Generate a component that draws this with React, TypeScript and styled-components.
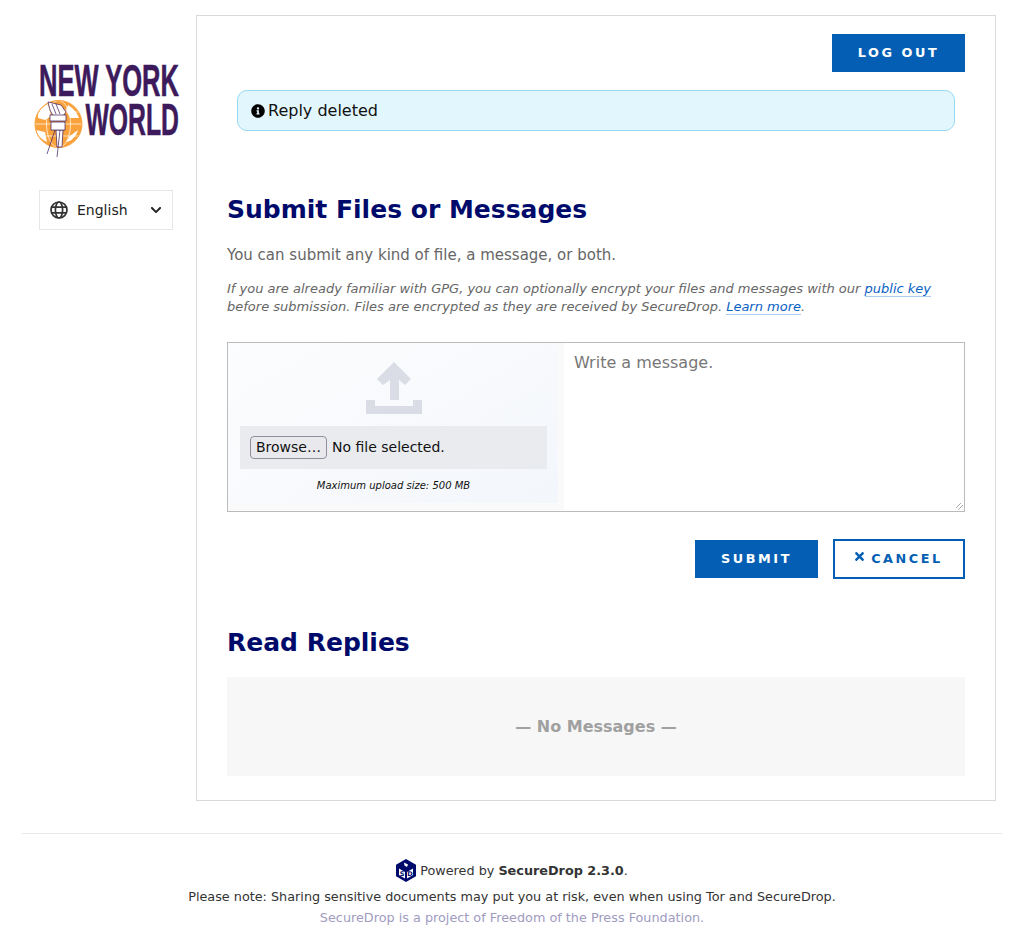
import React from "react";
import styled, {createGlobalStyle} from "styled-components";
import {FaChevronDown, FaInfoCircle, FaTimes} from "react-icons/fa";

const GlobalStyle = createGlobalStyle`
  html, body {
    margin: 0;
    padding: 0;
    background: #fff;
    font-family: "DejaVu Sans", Verdana, sans-serif;
    color: #333;
  }
  * {
    box-sizing: border-box;
  }
`;

const Page = styled.div`
  width: 1024px;
  padding-top: 15px;
`;

const Columns = styled.div`
  display: flex;
  align-items: flex-start;
`;

const Sidebar = styled.aside`
  width: 196px;
  padding: 49px 0 0 32px;
`;

const LogoSvg = styled.svg`
  display: block;
  width: 150px;
  height: 96px;
`;

const LocaleBox = styled.div`
  display: flex;
  align-items: center;
  width: 134px;
  height: 40px;
  margin: 30px 0 0 7px;
  padding: 0 10px;
  border: 1px solid #e6e6e6;
  font-size: 14px;
  color: #222;
`;

const LocaleLabel = styled.span`
  margin-left: 9px;
  flex: 1;
`;

const Main = styled.main`
  width: 800px;
  height: 786px;
  padding: 18px 30px 0;
  border: 1px solid #d9d9d9;
`;

const TopRow = styled.div`
  display: flex;
  justify-content: flex-end;
`;

const Button = styled.button<{$outline?: boolean}>`
  display: flex;
  align-items: center;
  justify-content: center;
  height: ${p => (p.$outline ? 40 : 38)}px;
  padding: 0 ${p => (p.$outline ? 2 : 0)}px ${p => (p.$outline ? 2 : 1)}px 0;
  border: ${p => (p.$outline ? "2px solid #045fb4" : "none")};
  border-radius: 0;
  background: ${p => (p.$outline ? "#fff" : "#045fb4")};
  color: ${p => (p.$outline ? "#045fb4" : "#fff")};
  font: bold 12.8px "DejaVu Sans", sans-serif;
  letter-spacing: 2.56px;
`;

const LogoutButton = styled(Button)`
  width: 133px;
`;

const SubmitButton = styled(Button)`
  width: 123px;
`;

const CancelButton = styled(Button)`
  width: 132px;
  svg {
    margin: -3px 5px 0 0;
    font-size: 13px;
  }
`;

const Flash = styled.div`
  display: flex;
  align-items: center;
  gap: 3px;
  height: 41px;
  margin: 18px 10px 0;
  padding: 0 13px;
  border: 1px solid #96daf3;
  border-radius: 10px;
  background: #e2f6fd;
  color: #111;
  font-size: 16px;
  svg {
    font-size: 14px;
    color: #000;
  }
`;

const Heading = styled.h2<{$top: number}>`
  margin: ${p => p.$top}px 0 0;
  font-size: 25px;
  line-height: 30px;
  font-weight: bold;
  color: #000a6b;
`;

const Lead = styled.p`
  margin: 20px 0 0;
  font-size: 15px;
  line-height: 20px;
  color: #666;
`;

const Note = styled.p`
  margin: 15px 0 0;
  font-size: 13px;
  font-style: italic;
  line-height: 18px;
  color: #666;
`;

const NoteLink = styled.a`
  color: #0b62c4;
  border-bottom: 1px solid #a8cdf0;
`;

const Composer = styled.div`
  display: flex;
  height: 170px;
  margin-top: 26px;
  border: 1px solid #bbb;
`;

const UploadPanel = styled.div`
  display: flex;
  flex-direction: column;
  align-items: center;
  width: 336px;
  padding: 19px 17px 0 12px;
  background: linear-gradient(150deg, #fcfdfe, #f3f6fb) 0 0 / 330px 160px no-repeat, #fafafa;
`;

const FileRow = styled.div`
  display: flex;
  align-items: center;
  gap: 5px;
  width: 100%;
  height: 43px;
  margin-top: 12px;
  padding: 0 0 1px 10px;
  background: #e9ebef;
  font-size: 14px;
  color: #111;
`;

const BrowseButton = styled.span`
  display: flex;
  align-items: center;
  justify-content: center;
  width: 77px;
  height: 23px;
  border: 1px solid #8f8f9d;
  border-radius: 4px;
  background: #e9e9ed;
  color: #111;
`;

const UploadLimit = styled.div`
  margin-top: 10px;
  font-size: 10px;
  font-style: italic;
  line-height: 14px;
  color: #111;
`;

const MessageInput = styled.textarea`
  flex: 1;
  padding: 10px 10px;
  border: none;
  outline: none;
  resize: none;
  background: linear-gradient(135deg, transparent 3px, #aaa 3px 4px, transparent 4px 6px, #aaa 6px 7px, transparent 7px) right 1px bottom 1px / 7px 7px no-repeat, #fff;
  font: 16px/20px "DejaVu Sans", sans-serif;
  &::placeholder {
    color: #777;
    opacity: 1;
  }
`;

const Actions = styled.div`
  display: flex;
  justify-content: flex-end;
  align-items: center;
  gap: 15px;
  margin-top: 27px;
`;

const EmptyReplies = styled.div`
  display: flex;
  align-items: center;
  justify-content: center;
  height: 99px;
  margin-top: 19px;
  background: #f7f7f7;
  color: #a0a0a0;
  font-size: 16px;
  font-weight: bold;
`;

const Footer = styled.footer`
  margin: 32px 22px 0;
  padding-top: 26px;
  border-top: 1px solid #e8e8e8;
  text-align: center;
  font-size: 12.8px;
  color: #333;
`;

const FooterLine = styled.div<{$muted?: boolean}>`
  height: 21px;
  line-height: 21px;
  color: ${p => (p.$muted ? "#a09bbf" : "#333")};
`;

const PoweredLine = styled(FooterLine)`
  height: 22px;
  line-height: 22px;
  margin-bottom: 4px;
  svg {
    vertical-align: middle;
    margin: -2px 4px 0 0;
  }
`;

function Logo(): JSX.Element {
    const purple = "#3c1a5b";
    return <LogoSvg viewBox="0 0 150 96">
        <g fontFamily={'"Liberation Sans", sans-serif'} fontWeight="bold" fill={purple} stroke={purple} strokeWidth="0.6">
            <text transform="translate(7 32) scale(0.58 1)" fontSize="44">NEW YORK</text>
            <text transform="translate(53.5 71) scale(0.55 1)" fontSize="45">WORLD</text>
        </g>
        <circle cx="26.5" cy="60" r="23.5" fill="#f9a13a"/>
        <g fill="#fff">
            <path d="M6 50 q4 -8 10 -10 l3 12 -6 4 -7 -2z"/>
            <path d="M4 66 l9 2 2 10 q-9 -4 -11 -12z"/>
            <path d="M36 41 q8 5 11 13 l-9 0 -4 -8z"/>
            <path d="M38 72 l8 -6 q-2 7 -8 11 l-4 1z"/>
        </g>
        <g fill="none" stroke="#fff" strokeWidth="0.7">
            <ellipse cx="26.5" cy="60" rx="12" ry="23.5"/>
            <path d="M3 60h47M6 48h41M6 72h41"/>
        </g>
        <circle cx="26.5" cy="60" r="23.5" fill="none" stroke="#f9a13a" strokeWidth="1"/>
        <g fill="#fff" stroke={purple} strokeWidth="0.7">
            <path d="M16 38 L29 41 L34 48 L31 52 L21 52 L18 46z"/>
            <path d="M24 66 L31 66 L30 83 L25 83z"/>
            <rect x="18" y="51" width="16" height="6"/>
            <rect x="19" y="58" width="14" height="8"/>
        </g>
        <g fill="none" stroke={purple} strokeWidth="0.7">
            <path d="M23 66 L15 90"/>
            <path d="M28 66 L25 93"/>
            <path d="M20 40 L24 50 M24 40 L28 50"/>
        </g>
    </LogoSvg>;
}

function GlobeIcon(): JSX.Element {
    return <svg width="18" height="18" viewBox="0 0 18 18" fill="none" stroke="#333" strokeWidth="1.7">
        <circle cx="9" cy="9" r="8"/>
        <ellipse cx="9" cy="9" rx="3.6" ry="8"/>
        <path d="M1.5 6.2h15M1.5 11.8h15"/>
    </svg>;
}

function UploadIcon(): JSX.Element {
    return <svg width="56" height="52" viewBox="0 0 56 52" fill="#dadde6">
        <path d="M28 0 L45 17 L39 23 L33 18 L33 38 L24 38 L24 18 L17 23 L11 17z"/>
        <path d="M0 38 H9 V44 H47 V38 H56 V52 H0z"/>
    </svg>;
}

function SecureDropIcon(): JSX.Element {
    return <svg width="20" height="23" viewBox="0 0 20 23">
        <path d="M10 0 L20 5.7 V17.3 L10 23 L0 17.3 V5.7z" fill="#000a6b"/>
        <path d="M3 9.5 L9 13 V19.5 L3 16z M11 13 L17 9.5 V16 L11 19.5z" fill="#fff"/>
        <path d="M8 3.5 L12 5.5 L11 8 L8.5 6.5z" fill="#fff"/>
        <g fontFamily={'"DejaVu Sans", sans-serif'} fontWeight="bold" fontSize="6.5" fill="#000a6b" textAnchor="middle">
            <text x="6" y="17">S</text>
            <text x="14" y="17">D</text>
        </g>
    </svg>;
}

export default function App(): JSX.Element {
    return <Page>
        <GlobalStyle/>
        <Columns>
            <Sidebar>
                <Logo/>
                <LocaleBox>
                    <GlobeIcon/>
                    <LocaleLabel>English</LocaleLabel>
                    <FaChevronDown size={12}/>
                </LocaleBox>
            </Sidebar>
            <Main>
                <TopRow>
                    <LogoutButton>LOG OUT</LogoutButton>
                </TopRow>
                <Flash><FaInfoCircle/>Reply deleted</Flash>
                <Heading $top={64}>Submit Files or Messages</Heading>
                <Lead>You can submit any kind of file, a message, or both.</Lead>
                <Note>
                    If you are already familiar with GPG, you can optionally encrypt your files and messages with
                    our <NoteLink>public key</NoteLink> before submission. Files are encrypted as they are received
                    by SecureDrop. <NoteLink>Learn more</NoteLink>.
                </Note>
                <Composer>
                    <UploadPanel>
                        <UploadIcon/>
                        <FileRow>
                            <BrowseButton>Browse…</BrowseButton>
                            No file selected.
                        </FileRow>
                        <UploadLimit>Maximum upload size: 500 MB</UploadLimit>
                    </UploadPanel>
                    <MessageInput placeholder="Write a message."/>
                </Composer>
                <Actions>
                    <SubmitButton>SUBMIT</SubmitButton>
                    <CancelButton $outline><FaTimes/>CANCEL</CancelButton>
                </Actions>
                <Heading $top={49}>Read Replies</Heading>
                <EmptyReplies>— No Messages —</EmptyReplies>
            </Main>
        </Columns>
        <Footer>
            <PoweredLine><SecureDropIcon/>Powered by <b>SecureDrop 2.3.0</b>.</PoweredLine>
            <FooterLine>Please note: Sharing sensitive documents may put you at risk, even when using Tor and SecureDrop.</FooterLine>
            <FooterLine $muted>SecureDrop is a project of Freedom of the Press Foundation.</FooterLine>
        </Footer>
    </Page>;
}
